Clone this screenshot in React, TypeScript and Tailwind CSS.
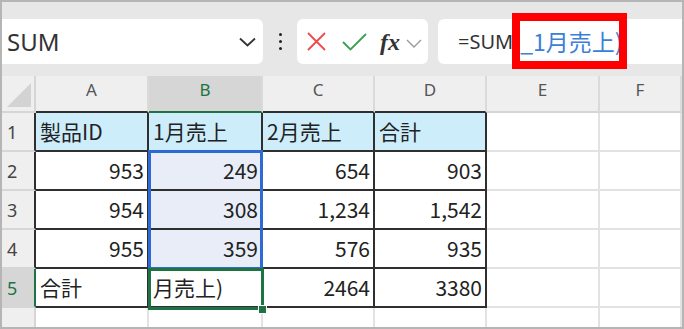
import React from 'react';

const colWidths = ['w-[113px]', 'w-[114px]', 'w-[112px]', 'w-[112px]', 'w-[113px]', 'flex-1'];
const colLetters = ['A', 'B', 'C', 'D', 'E', 'F'];

type CellVal = { text: string; left?: boolean };

const data: CellVal[][] = [
  [{ text: '製品ID', left: true }, { text: '1月売上', left: true }, { text: '2月売上', left: true }, { text: '合計', left: true }],
  [{ text: '953' }, { text: '249' }, { text: '654' }, { text: '903' }],
  [{ text: '954' }, { text: '308' }, { text: '1,234' }, { text: '1,542' }],
  [{ text: '955' }, { text: '359' }, { text: '576' }, { text: '935' }],
  [{ text: '合計', left: true }, { text: '月売上)', left: true }, { text: '2464' }, { text: '3380' }],
];

const headerBottom = (c: number) => {
  if (c === 1) return 'border-b-[#1f7244]';
  if (c < 4) return 'border-b-[#2f2f2f]';
  return 'border-b-[#d6d6d6]';
};

const rowHeaderRight = (r: number) => {
  if (r === 4) return 'border-r-[#1f7244]';
  if (r < 4) return 'border-r-[#2f2f2f]';
  return 'border-r-[#d6d6d6]';
};

const cellClass = (r: number, c: number) => {
  const inTable = r < 5 && c < 4;
  const border = inTable ? 'border-r-[#2f2f2f] border-b-[#2f2f2f]' : 'border-r-[#e2e2e2] border-b-[#e2e2e2]';
  let bg = 'bg-white';
  if (r === 0 && inTable) bg = 'bg-[#cdedfb]';
  else if (c === 1 && r >= 1 && r <= 3) bg = 'bg-[#e8edf7]';
  return `${border} ${bg}`;
};

const CellsFont = "font-['Noto_Sans_CJK_JP',sans-serif]";

export default function App() {
  return (
    <div className="relative w-[684px] h-[329px] border-2 border-[#b5b5b5] bg-white flex flex-col overflow-hidden">
      {/* toolbar */}
      <div className="h-[74px] shrink-0 bg-[#e7e7e7] flex items-start pt-[17px]">
        <div className="w-[261px] h-[45px] bg-white rounded-r-[6px] flex items-center justify-between pl-[5px] pr-[7px]">
          <span className="font-['Noto_Sans',sans-serif] text-[24px] leading-none text-[#333]">SUM</span>
          <svg width="17" height="10" viewBox="0 0 17 10" fill="none">
            <path d="M1 1.5 L8.5 8.5 L16 1.5" stroke="#333" strokeWidth="1.8" />
          </svg>
        </div>
        <div className="w-[34px] h-[45px] flex flex-col items-center justify-center gap-[4px]">
          <span className="w-[3px] h-[3px] rounded-full bg-[#222]" />
          <span className="w-[3px] h-[3px] rounded-full bg-[#222]" />
          <span className="w-[3px] h-[3px] rounded-full bg-[#222]" />
        </div>
        <div className="w-[131px] h-[45px] bg-white rounded-[6px] flex items-center pl-[10px]">
          <svg width="19" height="19" viewBox="0 0 19 19" fill="none">
            <path d="M1 1 L18 18 M18 1 L1 18" stroke="#ef4a4a" strokeWidth="1.8" />
          </svg>
          <svg width="25" height="18" viewBox="0 0 25 18" fill="none" className="ml-[16px]">
            <path d="M1 9 L8.5 16.5 L24 1" stroke="#3c9f55" strokeWidth="1.9" />
          </svg>
          <span className="ml-[13px] font-['Liberation_Serif',serif] italic font-semibold text-[24px] leading-none text-[#333]">fx</span>
          <svg width="16" height="9" viewBox="0 0 16 9" fill="none" className="ml-[6px] mt-[3px]">
            <path d="M1 1 L8 8 L15 1" stroke="#9a9a9a" strokeWidth="1.4" />
          </svg>
        </div>
        <div className="ml-[10px] flex-1 h-[45px] bg-white rounded-l-[6px] flex items-center pl-[20px]">
          <span className="font-['Noto_Sans',sans-serif] text-[20px] leading-none text-[#333]">=SUM(</span>
          <span className="ml-[1px] font-['Noto_Sans_CJK_JP',sans-serif] text-[23px] leading-none text-[#3b80d8]">_1月売上)</span>
        </div>
      </div>

      {/* red highlight */}
      <div className="absolute left-[510px] top-[11px] w-[115px] h-[56px] border-[8px] border-[#ff0000]" />

      {/* sheet */}
      <div className="relative flex-1 flex flex-col">
        {/* column header */}
        <div className="h-[37px] shrink-0 flex">
          <div className="w-[34px] border-r-2 border-b-2 border-r-[#d6d6d6] border-b-[#d6d6d6] bg-[#efefef] flex items-end justify-end pr-[2px] pb-[3px]">
            <svg width="25" height="25" viewBox="0 0 25 25">
              <path d="M24 0 L24 24 L0 24 Z" fill="#d3d3d3" />
            </svg>
          </div>
          {colLetters.map((l, c) => (
            <div
              key={l}
              className={`${colWidths[c]} border-r-2 border-b-2 border-r-[#dadada] ${headerBottom(c)} ${c === 1 ? 'bg-[#d6d6d6] text-[#1f7244]' : 'bg-[#efefef] text-[#555]'} flex items-center justify-center pb-[8px] font-['Noto_Sans',sans-serif] text-[17px] leading-none`}
            >
              {l}
            </div>
          ))}
        </div>

        {/* rows */}
        {[0, 1, 2, 3, 4, 5].map((r) => (
          <div key={r} className={`${r === 5 ? 'flex-1' : 'h-[39px] shrink-0'} flex`}>
            <div
              className={`w-[34px] border-r-2 border-b-2 ${rowHeaderRight(r)} border-b-[#d6d6d6] ${r === 4 ? 'bg-[#d6d6d6] text-[#1f7244]' : 'bg-[#efefef] text-[#444]'} flex items-center pl-[5px] font-['Noto_Sans',sans-serif] text-[18px] leading-none ${r === 5 ? 'pt-[22px]' : ''}`}
            >
              {r + 1}
            </div>
            {colWidths.map((w, c) => {
              const v = r < 5 && c < 4 ? data[r][c] : null;
              return (
                <div
                  key={c}
                  className={`${w} border-r-2 border-b-2 ${cellClass(r, c)} flex items-center ${v && !v.left ? 'justify-end pr-[3px]' : 'justify-start pl-[4px]'} ${CellsFont} text-[21px] leading-none text-[#222]`}
                >
                  {v ? v.text : ''}
                </div>
              );
            })}
          </div>
        ))}

        {/* referenced range B2:B4 */}
        <div className="absolute left-[146px] top-[74px] w-[115px] h-[120px] border-[3px] border-[#2d6bd2]" />
        {/* active cell B5 */}
        <div className="absolute left-[146px] top-[192px] w-[116px] h-[42px] border-[3px] border-[#1f7244]" />
        <div className="absolute left-[256px] top-[229px] w-[9px] h-[9px] bg-[#1f7244] border border-white" />
      </div>
    </div>
  );
}
